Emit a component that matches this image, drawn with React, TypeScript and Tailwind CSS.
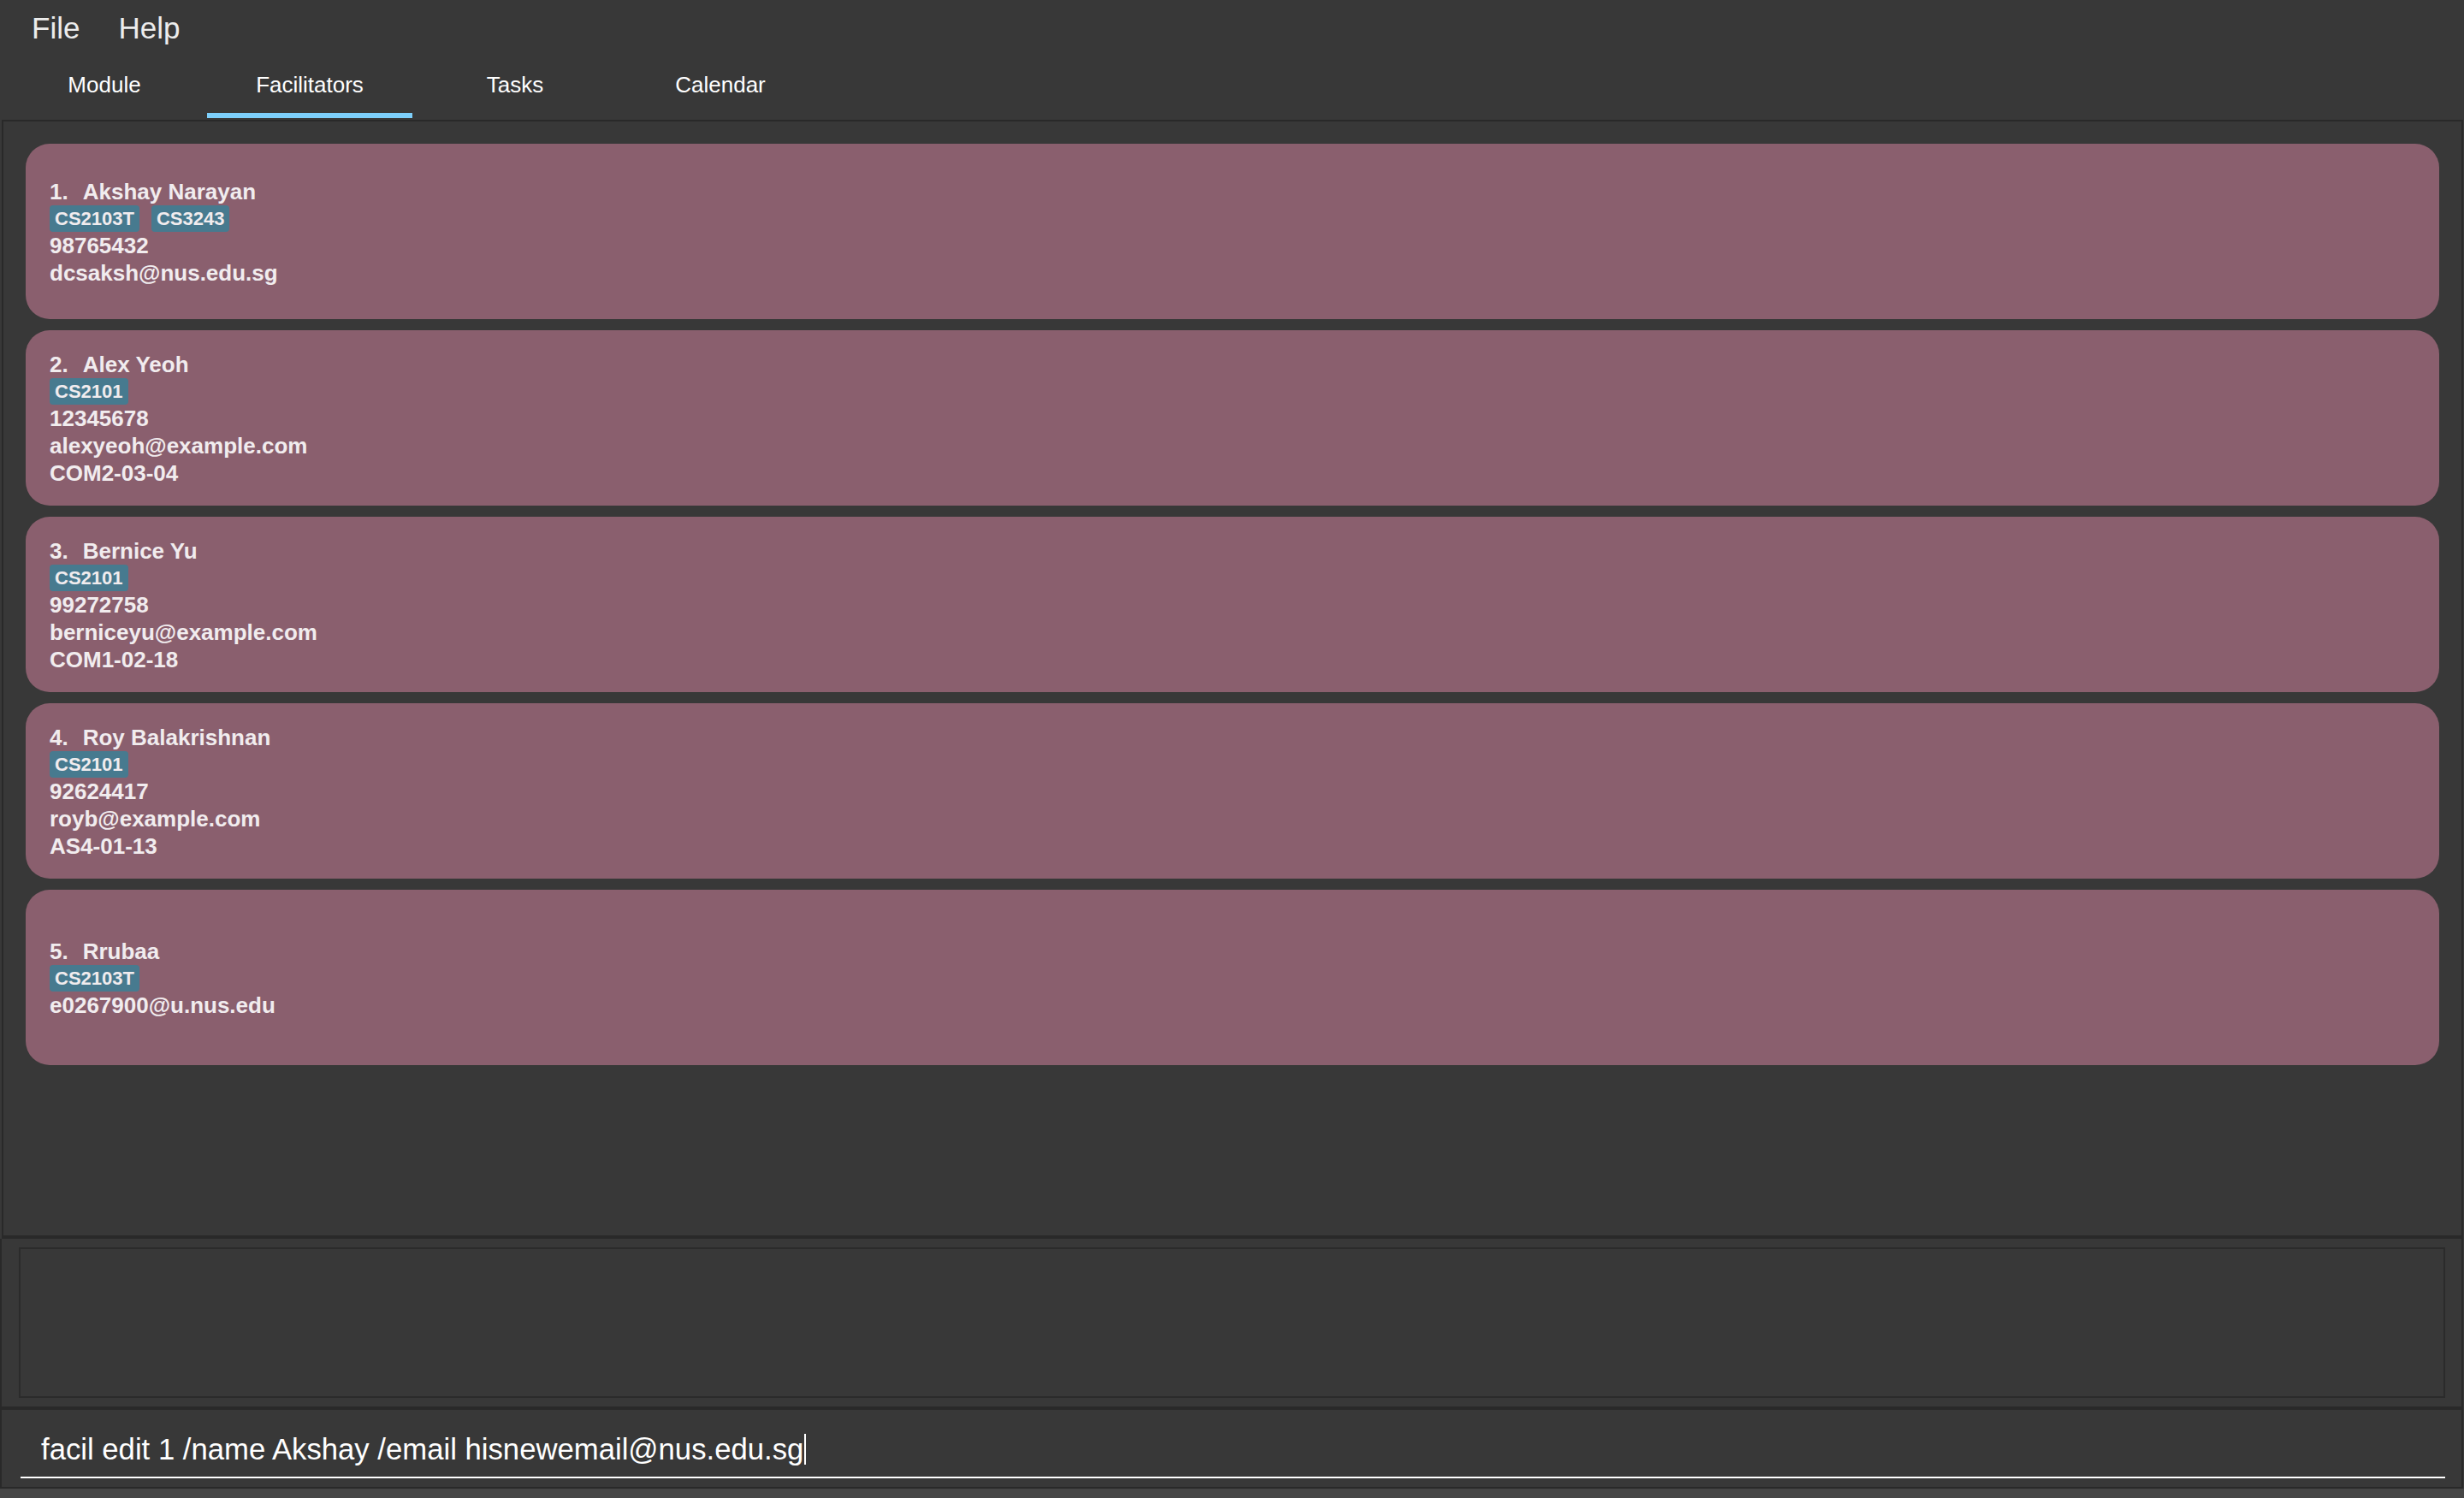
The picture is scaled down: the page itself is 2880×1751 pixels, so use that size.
import React from 'react'

type Facil = {
  name: string
  tags: string[]
  phone?: string
  email?: string
  office?: string
}

const facils: Facil[] = [
  { name: 'Akshay Narayan', tags: ['CS2103T', 'CS3243'], phone: '98765432', email: 'dcsaksh@nus.edu.sg' },
  { name: 'Alex Yeoh', tags: ['CS2101'], phone: '12345678', email: 'alexyeoh@example.com', office: 'COM2-03-04' },
  { name: 'Bernice Yu', tags: ['CS2101'], phone: '99272758', email: 'berniceyu@example.com', office: 'COM1-02-18' },
  { name: 'Roy Balakrishnan', tags: ['CS2101'], phone: '92624417', email: 'royb@example.com', office: 'AS4-01-13' },
  { name: 'Rrubaa', tags: ['CS2103T'], email: 'e0267900@u.nus.edu' },
]

const tabs = ['Module', 'Facilitators', 'Tasks', 'Calendar']

function FacilCard({ facil, index }: { facil: Facil; index: number }) {
  return (
    <div className="h-[205px] shrink-0 rounded-[28px] bg-[#8a5f6e] flex flex-col justify-center pl-[28px] pt-[2px] text-[#f1ecee] font-bold text-[26px] leading-[32px]">
      <div className="flex gap-[17px]">
        <span>{index + 1}.</span>
        <span>{facil.name}</span>
      </div>
      <div className="flex gap-[14px]">
        {facil.tags.map(tag => (
          <span key={tag} className="h-[31px] px-[6px] rounded-[4px] bg-[#477a8f] text-[22px] leading-[31px]">
            {tag}
          </span>
        ))}
      </div>
      {facil.phone && <div>{facil.phone}</div>}
      {facil.email && <div>{facil.email}</div>}
      {facil.office && <div>{facil.office}</div>}
    </div>
  )
}

export default function App() {
  return (
    <div
      className="w-[2880px] h-[1751px] bg-[#383838] flex flex-col overflow-hidden text-white"
      style={{ fontFamily: '"Liberation Sans", Arial, sans-serif' }}
    >
      {/* menu bar */}
      <div className="h-[66px] shrink-0 flex items-start pt-[13px] pl-[37px] gap-[45px] text-[35px] leading-[40px] text-[#ececec]">
        <span>File</span>
        <span>Help</span>
      </div>

      {/* tabs */}
      <div className="h-[74px] shrink-0 flex pl-[2px]">
        {tabs.map(tab => (
          <div key={tab} className="w-[240px] h-[72px] flex flex-col items-center pt-[18px]">
            <span className="text-[26px] leading-[30px]">{tab}</span>
            <div className={tab === 'Facilitators' ? 'mt-auto h-[6px] w-full bg-[#7dcffa]' : 'mt-auto h-[6px] w-full'} />
          </div>
        ))}
      </div>

      {/* facilitator list */}
      <div className="h-[1308px] shrink-0 ml-[2px] mr-px border-t-2 border-x-2 border-b-4 border-[#292929] px-[26px] pt-[26px] flex flex-col gap-[13px]">
        {facils.map((f, i) => (
          <FacilCard key={f.name} facil={f} index={i} />
        ))}
      </div>

      {/* result display */}
      <div className="h-[200px] shrink-0 mr-px border-x-2 border-b-4 border-[#292929] pl-[20px] pr-[19px] py-[10px]">
        <div className="h-full border-2 border-[#2b2b2b]" />
      </div>

      {/* command box */}
      <div className="h-[92px] shrink-0 mr-px border-x-2 border-b-2 border-[#292929] pl-[22px] pr-[19px] pt-[26px]">
        <div className="pl-[24px] h-[40px] flex items-center text-[34.7px] leading-[40px] text-white">
          <span>facil edit 1 /name Akshay /email hisnewemail@nus.edu.sg</span>
          <span className="inline-block w-[2px] h-[36px] bg-white ml-[1px]" />
        </div>
        <div className="mt-[12px] h-[2px] bg-white" />
      </div>

      <div className="flex-1 bg-[#464646]" />
    </div>
  )
}
